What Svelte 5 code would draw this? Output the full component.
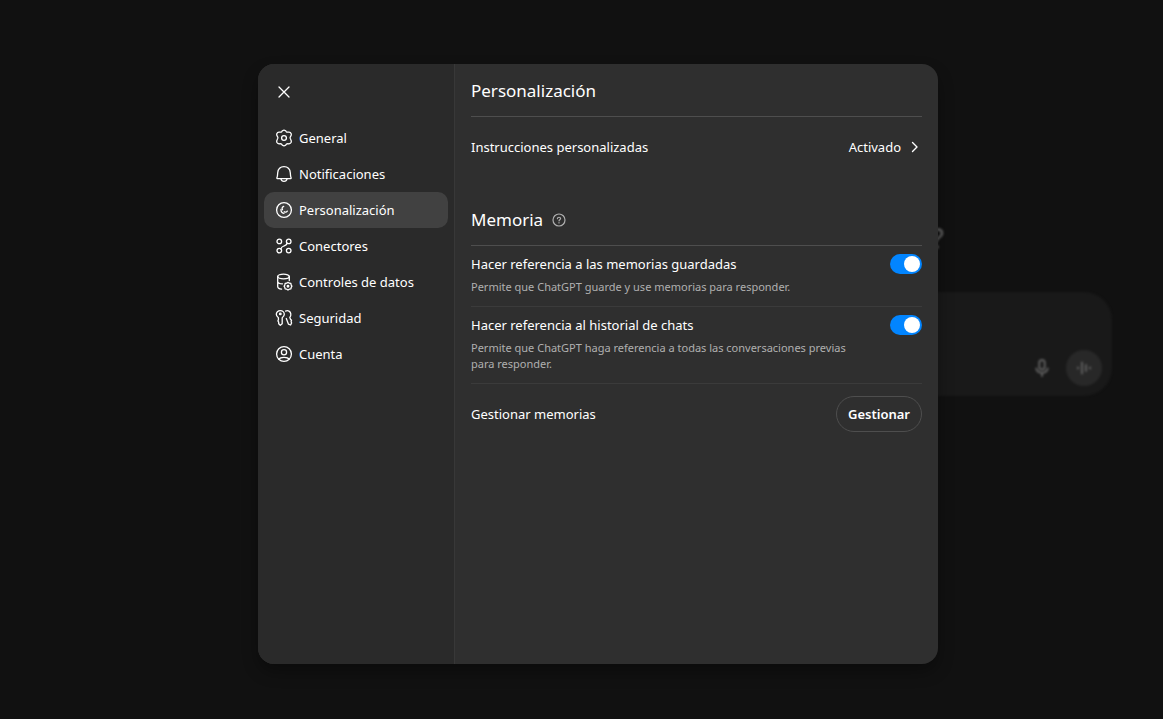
<script lang="ts">
  let active = $state("Personalización");
  let savedMemories = $state(true);
  let chatHistory = $state(true);

  const sections = [
    { name: "General", icon: "gear" },
    { name: "Notificaciones", icon: "bell" },
    { name: "Personalización", icon: "dial" },
    { name: "Conectores", icon: "nodes" },
    { name: "Controles de datos", icon: "database" },
    { name: "Seguridad", icon: "keys" },
    { name: "Cuenta", icon: "user" },
  ];
</script>

{#snippet icon(name: string)}
  <svg class="icon" viewBox="0 0 20 20" aria-hidden="true">
    {#if name === "gear"}
      <path d="M8.5 2.7Q10 1.500 11.500 2.700L12.300 3.700Q12.900 4.300 13.800 4.200L15 4.100Q16.600 4.200 17.200 5.700Q17.600 6.900 16.900 7.900L16.300 8.900Q15.900 9.500 16.300 10.500L16.900 11.800Q17.600 12.900 17.200 14.200Q16.600 15.600 15 15.800L13.800 15.700Q12.900 15.700 12.300 16.300L11.500 17.300Q10 18.500 8.500 17.300L7.700 16.300Q7.100 15.700 6.200 15.700L5 15.800Q3.400 15.600 2.800 14.200Q2.400 12.900 3.100 11.800L3.700 10.500Q4.100 9.500 3.700 8.900L3.100 7.900Q2.400 6.900 2.800 5.700Q3.400 4.200 5 4.100L6.200 4.200Q7.100 4.300 7.700 3.700Z" />
      <circle cx="10" cy="10" r="2.400" />
    {:else if name === "bell"}
      <path d="M3.200 14.600C2.800 14.600 2.800 14.100 3 13.600C3.600 12.100 3.500 10.800 3.700 8.700C4.100 4.800 6.500 2.600 10 2.600S15.900 4.800 16.300 8.700C16.500 10.800 16.400 12.100 17 13.600C17.200 14.100 17.200 14.600 16.800 14.600Z" />
      <path d="M6.900 14.800C7.700 18.200 12.300 18.200 13.100 14.800" />
    {:else if name === "dial"}
      <circle cx="10" cy="10" r="7.400" />
      <path d="M9.700 6.400C8.100 7 7.700 8.300 8.500 9.800" />
      <path d="M7 9.500C6.900 11.500 8 13 9.900 13.300M10.300 11.700C11.400 12.500 12.600 12.200 13.300 11.100" />
    {:else if name === "nodes"}
      <circle cx="5.300" cy="5.400" r="2.300" />
      <circle cx="14.700" cy="5.400" r="2.300" />
      <circle cx="5.300" cy="14.600" r="2.300" />
      <circle cx="14.700" cy="14.600" r="2.300" />
      <path d="M13.100 7.100C12.500 9.600 11 9.500 10 10S7.500 10.500 6.900 12.900" />
    {:else if name === "database"}
      <ellipse cx="9.500" cy="4.500" rx="5.800" ry="2.300" />
      <path d="M3.700 4.500V14.500C3.700 16.200 5.600 16.900 7.600 17.200M15.300 4.500V8.500M3.700 9.500C3.900 11 6 11.800 8.500 11.800" />
      <path d="M14 10.300L15.300 11.200L16.900 11.500L17.200 13.100L17.900 14.200L17.200 15.400L16.900 16.900L15.300 17.200L14 18L12.700 17.200L11.100 16.900L10.800 15.400L10.100 14.200L10.800 13.100L11.100 11.500L12.700 11.200Z" />
      <circle cx="14" cy="14.200" r=".8" />
    {:else if name === "keys"}
      <path d="M6.300 2.600C3.900 2.600 2.300 4.400 2.300 6.300C2.300 7.900 3.200 9 4.400 9.800V11.800L3.900 13L4.700 14.200V15.700L6.300 17.300L8.200 15.700V9.800C9.400 9 10.300 7.900 10.300 6.300C10.300 4.400 8.700 2.600 6.300 2.600Z" />
      <circle cx="6.300" cy="5.900" r=".8" />
      <path d="M11.500 3.100C14.100 1.900 16.500 3.500 16.800 5.800C17 7.400 16.600 8.500 15.800 9.400L16.500 11.300L17.500 12.300L17.100 13.600L17.600 15L16.600 17L14.400 16.100L12.300 10.500" />
    {:else if name === "user"}
      <circle cx="10" cy="10" r="7.400" />
      <circle cx="10" cy="8.200" r="2.600" />
      <path d="M5 15.300C6.200 12.600 13.800 12.600 15 15.300" />
    {/if}
  </svg>
{/snippet}

<div class="page">
  <div class="backdrop" aria-hidden="true">
    <span class="greeting">?</span>
    <div class="composer">
      <svg class="mic" viewBox="0 0 20 20">
        <rect x="7.300" y="2" width="5.400" height="9.500" rx="2.700" />
        <path d="M4.300 10.500C5 13.700 7 14.700 10 14.700S15 13.700 15.700 10.500M10 14.700V18" />
      </svg>
      <span class="voice">
        <svg viewBox="0 0 20 20">
          <path d="M4 9.500V10.500M8 4.500V15.500M12 7V13M16 9.500V10.500" />
        </svg>
      </span>
    </div>
  </div>

  <div class="dialog" role="dialog" aria-modal="true" aria-labelledby="title">
    <aside>
      <button class="close" aria-label="Cerrar">
        <svg class="icon" viewBox="0 0 20 20"><path d="M5 5L15 15M15 5L5 15" /></svg>
      </button>
      <nav>
        {#each sections as section}
          <button
            class="tab"
            class:active={active === section.name}
            onclick={() => (active = section.name)}
          >
            {@render icon(section.icon)}
            {section.name}
          </button>
        {/each}
      </nav>
    </aside>

    <main>
      <h2 id="title">Personalización</h2>
      <div class="row">
        <span>Instrucciones personalizadas</span>
        <button class="value">
          Activado
          <svg class="chevron" viewBox="0 0 16 16" aria-hidden="true"><path d="M6.500 3.500L11 8L6.500 12.500" /></svg>
        </button>
      </div>

      <h2 class="memory">
        Memoria
        <svg class="help" viewBox="0 0 16 16" aria-hidden="true">
          <circle cx="8" cy="8" r="6" />
          <path d="M6.400 6.700C6.500 4.700 9.600 4.800 9.600 6.600C9.600 7.700 8.100 7.800 8 8.900M8 10.600V10.900" />
        </svg>
      </h2>
      <div class="setting">
        <div class="line">
          <label for="saved">Hacer referencia a las memorias guardadas</label>
          <input id="saved" type="checkbox" role="switch" bind:checked={savedMemories} />
        </div>
        <p>Permite que ChatGPT guarde y use memorias para responder.</p>
      </div>
      <div class="setting">
        <div class="line">
          <label for="history">Hacer referencia al historial de chats</label>
          <input id="history" type="checkbox" role="switch" bind:checked={chatHistory} />
        </div>
        <p>Permite que ChatGPT haga referencia a todas las conversaciones previas para responder.</p>
      </div>
      <div class="row">
        <span>Gestionar memorias</span>
        <button class="manage">Gestionar</button>
      </div>
    </main>
  </div>
</div>

<style>
  :global(body) {
    margin: 0;
    background: #111;
    color: #fff;
    font-family: "Segoe UI", "Noto Sans", sans-serif;
    font-size: 13px;
    line-height: 20px;
  }

  .page {
    position: relative;
    box-sizing: border-box;
    min-height: 100vh;
    padding: 64px 0 48px 33px;
    display: flex;
    justify-content: center;
    align-items: flex-start;
    overflow: hidden;
  }

  button {
    padding: 0;
    border: none;
    background: none;
    color: inherit;
    font: inherit;
    cursor: pointer;
  }

  svg {
    flex: none;
    fill: none;
    stroke: currentColor;
    stroke-linecap: round;
    stroke-linejoin: round;
  }

  .icon {
    width: 20px;
    height: 20px;
    stroke-width: 1.3;
  }

  /* dimmed chat page under the dialog */
  .backdrop {
    position: absolute;
    top: 220px;
    right: 51px;
    width: 66%;
    color: #5c5c5c;
    filter: blur(1px);
  }

  .greeting {
    display: block;
    padding-right: 168px;
    font-size: 28px;
    font-weight: 500;
    line-height: 36px;
    text-align: right;
  }

  .composer {
    box-sizing: border-box;
    height: 104px;
    margin-top: 36px;
    padding: 10px;
    display: flex;
    align-items: flex-end;
    justify-content: flex-end;
    gap: 14px;
    border-radius: 28px;
    background: #191919;
  }

  .mic {
    width: 20px;
    height: 20px;
    padding: 8px 0;
    stroke-width: 2;
  }

  .voice {
    width: 36px;
    height: 36px;
    display: grid;
    place-items: center;
    border-radius: 50%;
    background: #282828;
  }

  .voice svg {
    width: 20px;
    height: 20px;
    stroke-width: 2;
  }

  .dialog {
    position: relative;
    width: 100%;
    max-width: 680px;
    min-height: 600px;
    display: flex;
    border-radius: 16px;
    background: #2f2f2f;
    box-shadow: 0 8px 16px rgba(0, 0, 0, 0.32);
    overflow: hidden;
  }

  aside {
    box-sizing: border-box;
    width: 197px;
    flex: none;
    padding: 10px 6px;
    border-right: 1px solid #383838;
    background: #2a2a2a;
  }

  .close {
    width: 36px;
    height: 36px;
    margin: 0 2px 10px;
    display: grid;
    place-items: center;
  }

  nav {
    display: flex;
    flex-direction: column;
  }

  .tab {
    height: 36px;
    padding: 0 10px;
    display: flex;
    align-items: center;
    gap: 5px;
    border-radius: 10px;
    text-align: left;
  }

  .tab.active {
    background: #414141;
  }

  main {
    flex: 1;
    min-width: 0;
    padding: 0 16px;
  }

  h2 {
    margin: 0;
    padding: 14px 0 13px;
    border-bottom: 1px solid #4e4e4e;
    font-size: 17px;
    font-weight: 400;
    line-height: 25px;
  }

  .memory {
    margin-top: 16px;
    display: flex;
    align-items: center;
    gap: 8px;
  }

  .help {
    width: 16px;
    height: 16px;
    color: #afafaf;
    stroke-width: 1.2;
  }

  .row {
    min-height: 60px;
    display: flex;
    align-items: center;
    justify-content: space-between;
  }

  .value {
    display: flex;
    align-items: center;
    gap: 5px;
  }

  .chevron {
    width: 16px;
    height: 16px;
    stroke-width: 1.4;
  }

  .setting {
    padding: 8px 0 11px;
    border-bottom: 1px solid #3b3b3b;
  }

  .line {
    display: flex;
    align-items: center;
    justify-content: space-between;
  }

  input {
    appearance: none;
    width: 32px;
    height: 20px;
    margin: 0;
    padding: 2px;
    box-sizing: border-box;
    display: flex;
    border-radius: 10px;
    background: #5d5d5d;
    cursor: pointer;
  }

  input::before {
    content: "";
    width: 16px;
    height: 16px;
    border-radius: 50%;
    background: #fff;
  }

  input:checked {
    justify-content: flex-end;
    background: #0285ff;
  }

  p {
    margin: 5px 60px 0 0;
    color: #afafaf;
    font-size: 11px;
    line-height: 16px;
  }

  .manage {
    height: 36px;
    padding: 0 11px;
    border: 1px solid #4e4e4e;
    border-radius: 18px;
    font-weight: 600;
  }
</style>
